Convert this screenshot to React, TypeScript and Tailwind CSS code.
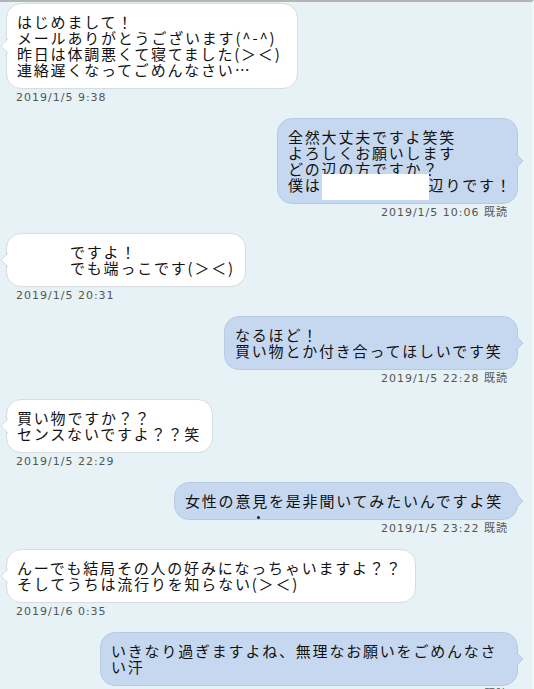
import React from "react";

type Msg = {
  side: "left" | "right";
  width: string;
  lines: React.ReactNode[];
  time: string;
  indent?: boolean;
  dot?: boolean;
};

// redacted area in the second message
const Blank = () => (
  <span className="relative inline-block w-[107px] h-[16px] align-top">
    <span className="absolute left-0 top-[-3px] w-[107px] h-[26px] bg-white" />
  </span>
);

const messages: Msg[] = [
  {
    side: "left",
    width: "w-[292px]",
    lines: ["はじめまして！", "メールありがとうございます(^-^)", "昨日は体調悪くて寝てました(＞＜)", "連絡遅くなってごめんなさい…"],
    time: "2019/1/5 9:38",
  },
  {
    side: "right",
    width: "w-[241px]",
    lines: [
      "全然大丈夫ですよ笑笑",
      "よろしくお願いします",
      "どの辺の方ですか？",
      <>
        僕は<Blank />辺りです！
      </>,
    ],
    time: "2019/1/5 10:06 既読",
  },
  {
    side: "left",
    width: "w-[240px]",
    indent: true,
    lines: ["ですよ！", "でも端っこです(＞＜)"],
    time: "2019/1/5 20:31",
  },
  {
    side: "right",
    width: "w-[294px]",
    lines: ["なるほど！", "買い物とか付き合ってほしいです笑"],
    time: "2019/1/5 22:28 既読",
  },
  {
    side: "left",
    width: "w-[207px]",
    lines: ["買い物ですか？？", "センスないですよ？？笑"],
    time: "2019/1/5 22:29",
  },
  {
    side: "right",
    width: "w-[344px]",
    lines: ["女性の意見を是非聞いてみたいんですよ笑"],
    time: "2019/1/5 23:22 既読",
    dot: true,
  },
  {
    side: "left",
    width: "w-[410px]",
    lines: ["んーでも結局その人の好みになっちゃいますよ？？", "そしてうちは流行りを知らない(＞＜)"],
    time: "2019/1/6 0:35",
  },
  {
    side: "right",
    width: "w-[418px]",
    lines: ["いきなり過ぎますよね、無理なお願いをごめんなさ", "い汗"],
    time: "2019/1/6 0:48 既読",
  },
];

const Tail = ({ side }: { side: "left" | "right" }) => {
  const fill = side === "left" ? "#ffffff" : "#c6d8ef";
  const stroke = side === "left" ? "#d6dcdf" : "#b8cae0";
  return side === "left" ? (
    <svg width="8" height="14" viewBox="0 0 8 14" className="absolute left-[-7px] top-1/2 -translate-y-1/2">
      <polygon points="8,0 1,7 8,14" fill={fill} />
      <polyline points="8,0 1,7 8,14" fill="none" stroke={stroke} strokeWidth="1" />
    </svg>
  ) : (
    <svg width="8" height="14" viewBox="0 0 8 14" className="absolute right-[-7px] top-1/2 -translate-y-1/2">
      <polygon points="0,0 7,7 0,14" fill={fill} />
      <polyline points="0,0 7,7 0,14" fill="none" stroke={stroke} strokeWidth="1" />
    </svg>
  );
};

const Bubble = ({ m }: { m: Msg }) => {
  const left = m.side === "left";
  return (
    <div className={`flex flex-col ${left ? "items-start" : "items-end"}`}>
      <div
        className={`relative ${m.width} rounded-[15px] border py-[10px] pr-[10px] ${
          m.indent ? "pl-[63px]" : "pl-[10px]"
        } ${left ? "bg-white border-[#d6dcdf]" : "bg-[#c6d8ef] border-[#b8cae0]"}`}
      >
        <Tail side={m.side} />
        <div className="text-[15px] leading-[16px] tracking-[1.8px] text-[#111] whitespace-nowrap">
          {m.lines.map((l, i) => (
            <div key={i}>{l}</div>
          ))}
        </div>
        {m.dot && <span className="absolute left-[82px] top-[33px] w-[3px] h-[3px] bg-[#222] rounded-full" />}
      </div>
      <div
        className={`mt-[2px] text-[11px] leading-[14px] tracking-[1px] text-[#555] ${
          left ? "ml-[10px]" : "mr-[10px]"
        }`}
        style={{ fontFamily: '"DejaVu Sans", "Noto Sans CJK JP", sans-serif' }}
      >
        {m.time}
      </div>
    </div>
  );
};

export default function App() {
  return (
    <div
      className="flex flex-col gap-[13px] w-[534px] h-[689px] overflow-hidden bg-[#e6f2f5] border-t-2 border-t-[#b5b5b5] border-r-2 border-r-[#f0f7f9] pt-[1px] pl-[6px] pr-[14px]"
      style={{ fontFamily: '"Noto Sans CJK JP", sans-serif' }}
    >
      {messages.map((m, i) => (
        <Bubble key={i} m={m} />
      ))}
    </div>
  );
}
